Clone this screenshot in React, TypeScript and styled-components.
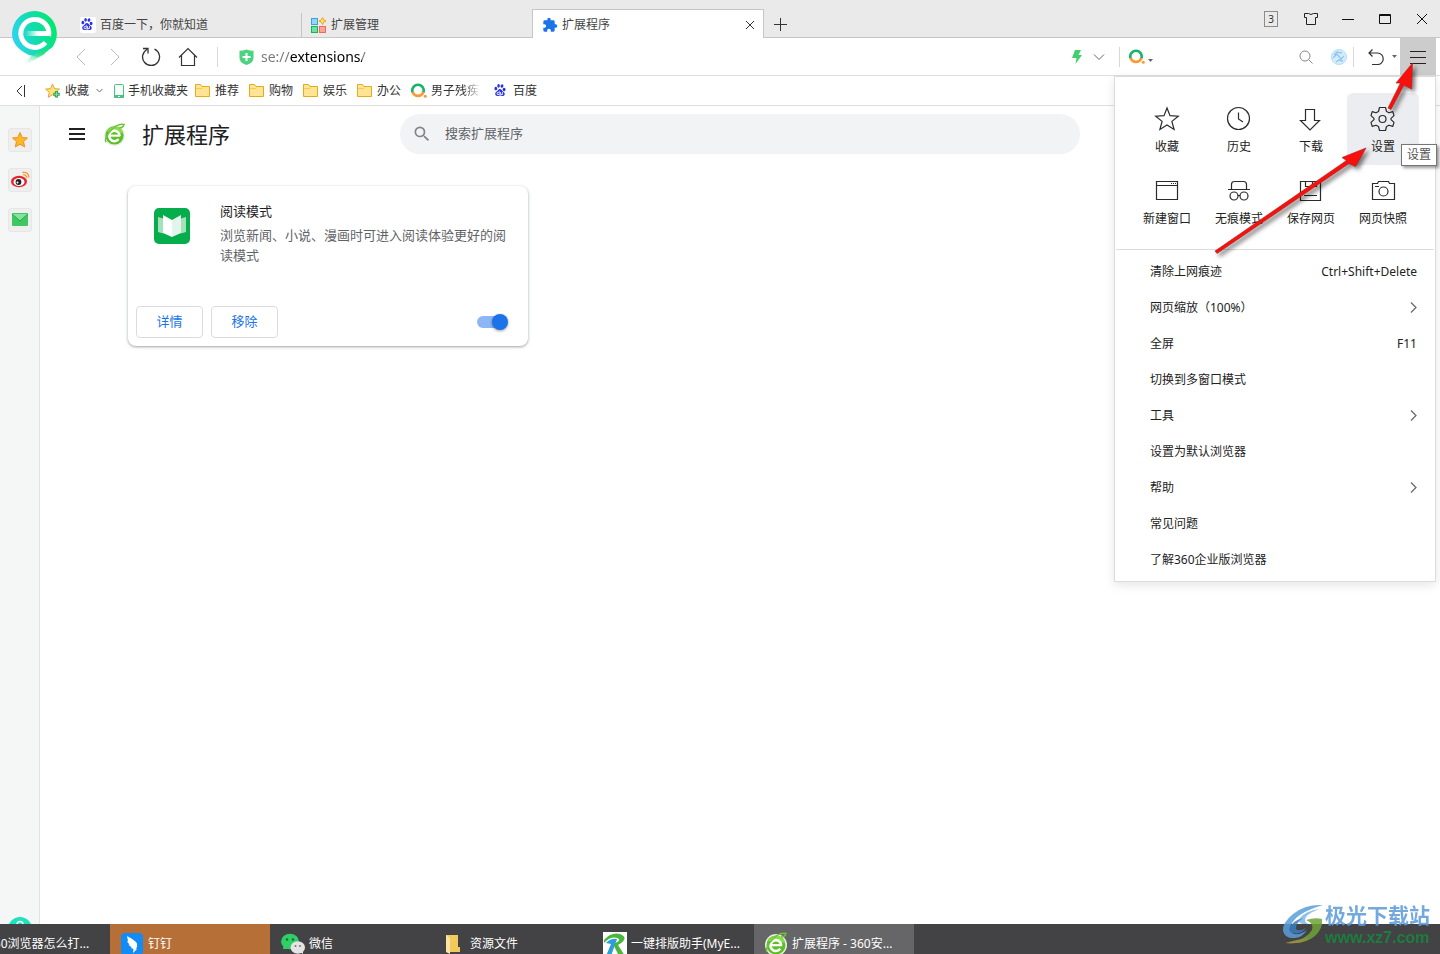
import React from "react";
import styled, { createGlobalStyle, css } from "styled-components";
import { SiBaidu } from "react-icons/si";
import { MdExtension, MdSearch } from "react-icons/md";

const GlobalStyle = createGlobalStyle`
  * { box-sizing: border-box; }
  body {
    margin: 0;
    background: #fff;
    color: #333;
    font-family: "Noto Sans", "Noto Sans CJK SC", sans-serif;
    font-size: 12px;
    line-height: 16px;
  }
  button, input { font: inherit; color: inherit; }
  button { border: 0; padding: 0; background: none; cursor: pointer; }
  a { color: inherit; text-decoration: none; }
  svg { display: block; flex: none; }
`;

/* ---------- Shell ---------- */

const Window = styled.div`
  position: relative;
  display: flex;
  flex-direction: column;
  height: 100vh;
  overflow: hidden;
`;

const BrandMark = styled.div`
  position: absolute;
  left: 11px;
  top: 10px;
  z-index: 2;
`;

const TabStrip = styled.header`
  display: flex;
  align-items: flex-end;
  height: 38px;
  padding-left: 70px;
  background: #eaeaea;
  box-shadow: inset 0 -1px #c6c6c6;
`;

const TabItem = styled.div<{ $active?: boolean; $divided?: boolean }>`
  display: flex;
  align-items: center;
  gap: 4px;
  width: ${(p) => (p.$active ? 232 : 231)}px;
  height: ${(p) => (p.$active ? 29 : 25)}px;
  padding: 0 8px 2px 9px;
  border-left: 1px solid ${(p) => (p.$divided ? "#c6c6c6" : "transparent")};
  ${(p) =>
    p.$active &&
    css`
      padding: 1px 8px 0 9px;
      background: #fff;
      border: 1px solid #c6c6c6;
      border-bottom: 0;
    `}
`;

const TabTitle = styled.button`
  flex: 1;
  height: 20px;
  text-align: left;
  color: #444;
`;

const IconButton = styled.button<{ $width?: number; $active?: boolean }>`
  display: flex;
  align-items: center;
  justify-content: center;
  flex: none;
  width: ${(p) => p.$width ?? 37}px;
  align-self: stretch;
  background: ${(p) => (p.$active ? "#cccccc" : "none")};
`;

const NewTabButton = styled.button`
  display: flex;
  align-items: center;
  justify-content: center;
  width: 32px;
  height: 29px;
`;

const WindowControls = styled.div`
  display: flex;
  align-items: center;
  align-self: stretch;
  margin-left: auto;
`;

const TabCount = styled.button`
  width: 14px;
  height: 16px;
  margin-right: 14px;
  border: 1px solid #8c8c8c;
  font-size: 10px;
  line-height: 14px;
`;

const Toolbar = styled.div`
  display: flex;
  align-items: center;
  height: 38px;
  padding: 0 4px 0 64px;
  border-bottom: 1px solid #dedede;
`;

const Rule = styled.span<{ $before?: number; $after?: number }>`
  flex: none;
  width: 1px;
  height: 20px;
  margin: 0 ${(p) => p.$after ?? 0}px 0 ${(p) => p.$before ?? 0}px;
  background: #d8d8d8;
`;

const AddressField = styled.label`
  display: flex;
  align-items: center;
  gap: 7px;
  flex: 1;
  min-width: 0;
`;

const AddressInput = styled.input`
  flex: 1;
  min-width: 0;
  height: 24px;
  padding: 0;
  border: 0;
  outline: 0;
  font-size: 14px;
  color: transparent;
  caret-color: #333;
  background: linear-gradient(to right, #777 29px, #000 29px, #000 101px, #777 101px);
  -webkit-background-clip: text;
  background-clip: text;
`;

const EngineButton = styled.button`
  display: flex;
  align-items: center;
  gap: 3px;
  flex: none;
  & > :last-child { margin-top: 8px; }
`;

const QuickSearch = styled.input`
  width: 134px;
  height: 24px;
  padding: 0 4px;
  border: 0;
  outline: 0;
  background: none;
`;

const BookmarkBar = styled.nav`
  display: flex;
  align-items: center;
  gap: 7px;
  height: 30px;
  padding-left: 11px;
  border-bottom: 1px solid #dedede;
`;

const FolderGroup = styled.div`
  display: flex;
  gap: 10px;
`;

const Bookmark = styled.a<{ $indent?: number }>`
  display: flex;
  align-items: center;
  gap: 4px;
  padding-left: ${(p) => p.$indent ?? 0}px;
  white-space: nowrap;
`;

const FadedLabel = styled.span`
  width: 52px;
  overflow: hidden;
  mask-image: linear-gradient(to right, #000 32px, transparent 50px);
`;

/* ---------- Page ---------- */

const Body = styled.div`
  display: flex;
  flex: 1;
  min-height: 0;
`;

const SideRail = styled.aside`
  display: flex;
  flex-direction: column;
  align-items: center;
  gap: 16px;
  width: 40px;
  padding-top: 22px;
  overflow: hidden;
  background: #f5f6f6;
  border-right: 1px solid #e2e2e2;
`;

const RailButton = styled.button`
  display: flex;
  align-items: center;
  justify-content: center;
  flex: none;
  width: 24px;
  height: 24px;
  border: 1px solid #e6e6e6;
  border-radius: 3px;
  background: #efefef;
`;

const HelpButton = styled.button`
  flex: none;
  margin: auto 0 -17px;
`;

const Page = styled.main`
  flex: 1;
  min-width: 0;
`;

const PageHeader = styled.div`
  display: grid;
  grid-template-columns: 1fr minmax(0, 680px) 1fr;
  align-items: center;
  height: 56px;
`;

const PageHeading = styled.div`
  display: flex;
  align-items: center;
  padding-left: 29px;
`;

const Heading = styled.h1`
  margin: 0 0 0 16px;
  font-size: 22px;
  line-height: 32px;
  font-weight: 400;
  color: #202124;
  white-space: nowrap;
`;

const BrowserLogo = styled.span`
  margin-left: 18px;
`;

const SearchBox = styled.label`
  display: flex;
  align-items: center;
  gap: 13px;
  height: 40px;
  padding: 0 12px;
  border-radius: 20px;
  background: #f1f3f4;
  color: #80868b;
`;

const SearchInput = styled.input`
  flex: 1;
  min-width: 0;
  padding: 0 0 2px;
  border: 0;
  outline: 0;
  background: none;
  font-size: 13px;
  line-height: 20px;
  color: #202124;
  &::placeholder { color: #5f6368; opacity: 1; }
`;

const CardGrid = styled.div`
  display: grid;
  grid-template-columns: repeat(auto-fill, 400px);
  justify-content: center;
  gap: 12px;
  padding: 24px 0;
`;

const Card = styled.article`
  display: flex;
  flex-direction: column;
  justify-content: space-between;
  min-height: 160px;
  border-radius: 8px;
  background: #fff;
  box-shadow: 0 1px 2px rgba(60, 64, 67, 0.3), 0 1px 3px 1px rgba(60, 64, 67, 0.15);
  font-size: 13px;
  line-height: 20px;
`;

const CardBody = styled.div`
  display: flex;
  gap: 30px;
  padding: 15px 20px 0 26px;
  & > svg { margin-top: 7px; }
`;

const CardTitle = styled.h2`
  margin: 0 0 4px;
  font-size: 13px;
  font-weight: 400;
  color: #202124;
`;

const CardText = styled.p`
  margin: 0;
  color: #5f6368;
`;

const CardActions = styled.div`
  display: flex;
  align-items: center;
  gap: 8px;
  padding: 8px;
`;

const OutlineButton = styled.button`
  width: 67px;
  height: 32px;
  padding-bottom: 2px;
  border: 1px solid #dadce0;
  border-radius: 4px;
  background: #fff;
  color: #1a73e8;
`;

const Toggle = styled.input`
  appearance: none;
  width: 31px;
  height: 12px;
  margin: 0 12px 0 auto;
  border-radius: 8px;
  background: linear-gradient(to right, #8cb6f5 24px, transparent 24px);
  &::before {
    content: "";
    display: block;
    width: 16px;
    height: 16px;
    margin: -2px 0 0 15px;
    border-radius: 50%;
    background: #1a73e8;
    box-shadow: 0 1px 3px rgba(0, 0, 0, 0.4);
  }
`;

/* ---------- Main menu ---------- */

const Menu = styled.div`
  position: absolute;
  z-index: 3;
  top: 76px;
  right: 4px;
  width: 322px;
  padding: 16px 1px 3px;
  border: 1px solid #dcdcdc;
  background: #fff;
  box-shadow: 0 3px 10px rgba(0, 0, 0, 0.1);
  color: #222;
`;

const TileGrid = styled.div`
  display: grid;
  grid-template-columns: repeat(4, 72px);
  padding: 0 15px 12px;
`;

const Tile = styled.button<{ $active?: boolean }>`
  display: flex;
  flex-direction: column;
  align-items: center;
  gap: 4px;
  height: 72px;
  padding-top: 10px;
  border-radius: 6px;
  background: ${(p) => (p.$active ? "#ecedf1" : "none")};
`;

const MenuRows = styled.div`
  padding-top: 4px;
  border-top: 1px solid #dcdcdc;
`;

const MenuRow = styled.button`
  display: flex;
  align-items: center;
  justify-content: space-between;
  width: 100%;
  height: 36px;
  padding: 0 17px 0 34px;
`;

const Tooltip = styled.div`
  position: absolute;
  z-index: 4;
  top: 144px;
  right: 3px;
  padding: 2px 5px;
  border: 1px solid #767676;
  background: #fff;
  box-shadow: 2px 2px 3px rgba(0, 0, 0, 0.4);
  color: #555;
`;

const Pointers = styled.svg`
  position: absolute;
  z-index: 5;
  top: 50px;
  right: 0;
  pointer-events: none;
  filter: drop-shadow(3px 3px 2px rgba(0, 0, 0, 0.5));
`;

/* ---------- Taskbar ---------- */

const Taskbar = styled.footer`
  display: flex;
  gap: 1px;
  height: 30px;
  overflow: hidden;
  background: #434244;
  color: #fff;
`;

const TaskButton = styled.button<{ $tone?: string; $clipped?: boolean }>`
  display: flex;
  align-items: center;
  gap: 4px;
  flex: none;
  width: 160px;
  height: 40px;
  margin-left: ${(p) => (p.$clipped ? -51 : 0)}px;
  padding-left: 10px;
  background: ${(p) => p.$tone ?? "none"};
  white-space: nowrap;
`;

const TaskIcon = styled.span`
  display: flex;
  justify-content: center;
  width: 24px;
`;

const Watermark = styled.div`
  position: absolute;
  z-index: 2;
  right: 10px;
  bottom: 5px;
  display: flex;
  opacity: 0.85;
`;

const WatermarkName = styled.div`
  font-size: 21px;
  line-height: 24px;
  font-weight: 700;
  color: #5b9bd8;
`;

const WatermarkSite = styled.div`
  font-family: "Liberation Sans", sans-serif;
  font-size: 16px;
  line-height: 22px;
  font-weight: 700;
  color: #17883f;
`;

/* ---------- Drawings ---------- */

const line = { fill: "none", stroke: "currentColor" } as const;

const PinLogo = () => (
  <svg width="47" height="58" viewBox="0 0 47 58" aria-hidden>
    <defs>
      <linearGradient id="pin" x1="0" y1="0.7" x2="1" y2="0.4">
        <stop offset="0" stopColor="#2fd3f5" />
        <stop offset="0.5" stopColor="#12dcb0" />
        <stop offset="1" stopColor="#04e86c" />
      </linearGradient>
      <linearGradient id="tail" x1="0.8" y1="0" x2="0.3" y2="1">
        <stop offset="0" stopColor="#04e570" />
        <stop offset="0.4" stopColor="#2be28a" />
        <stop offset="1" stopColor="#aef5d4" stopOpacity="0" />
      </linearGradient>
      <linearGradient id="bar" x1="0" x2="1">
        <stop offset="0" stopColor="#fff" stopOpacity="0" />
        <stop offset="0.5" stopColor="#fff" />
      </linearGradient>
    </defs>
    <path d="M23.500 1A22.500 22.500 0 0 1 41 37.500L27 47 18 45Q1 37 1 23.500A22.500 22.500 0 0 1 23.500 1Z" fill="url(#pin)" />
    <path d="M43 35 L32 45 L11 57 Q16 51 20 46 Q30 42 43 35Z" fill="url(#tail)" />
    <path d="M37.600 26 A14 14 0 1 0 34.500 32.500" fill="none" stroke="#fff" strokeWidth="5" />
    <rect x="14" y="21" width="26" height="5" fill="url(#bar)" />
  </svg>
);

const BaiduIcon = () => (
  <svg width="16" height="16" viewBox="0 0 16 16" aria-hidden>
    <rect width="16" height="16" rx="2" fill="#fff" />
    <SiBaidu x="1" y="1" width="14" height="14" color="#2932e1" />
  </svg>
);

const AppsIcon = () => (
  <svg width="16" height="16" viewBox="0 0 16 16" aria-hidden>
    <rect x="0.500" y="1.500" width="6" height="6" fill="#8fd6f7" stroke="#3ba3dc" />
    <rect x="0.500" y="9.500" width="6" height="6" fill="#6ee0a0" stroke="#1fae5c" />
    <rect x="8.500" y="9.500" width="6" height="6" fill="#fba59a" stroke="#f06a5c" />
    <path d="M11.500 0.500l1.200 2.300 2.300 1.200-2.300 1.200-1.200 2.300-1.200-2.300L8 4l2.300-1.200z" fill="#ffe066" stroke="#eba61c" />
  </svg>
);

const RingIcon = () => (
  <svg width="16" height="16" viewBox="0 0 16 16" aria-hidden>
    <path d="M1.700 9.500A5.700 5.700 0 1 1 12.300 9.500" fill="none" stroke="#18b46c" strokeWidth="2.600" />
    <path d="M1.700 9.300A5.700 5.700 0 0 0 12.300 9.300" fill="none" stroke="#fb9a35" strokeWidth="2.600" />
    <circle cx="14.300" cy="13.300" r="1.500" fill="#fb9a35" />
  </svg>
);

const FolderIcon = () => (
  <svg width="16" height="16" viewBox="0 0 16 16" aria-hidden>
    <path d="M0.500 1.500h5l1.500 2h7.500v10h-14z" fill="#ffe493" stroke="#e5ab1c" />
    <path d="M1 5.500h6l1-1" fill="none" stroke="#f3cb5c" />
  </svg>
);

const FavouriteIcon = () => (
  <svg width="16" height="16" viewBox="0 0 16 16" aria-hidden>
    <path d="M7.500 1l2 4.600 5 .5-3.800 3.300 1.100 4.900-4.300-2.600-4.300 2.600 1.100-4.900L.6 6.100l4.900-.5z" fill="#ffe27a" stroke="#e9a43a" strokeLinejoin="round" />
    <path d="M11.500 8v6.500M8.300 11.300h6.500" stroke="#2fa565" strokeWidth="3" />
    <path d="M11.500 9v4.500M9.300 11.300h4.500" stroke="#7fe0a6" strokeWidth="1" />
  </svg>
);

const PhoneIcon = () => (
  <svg width="14" height="16" viewBox="2 0 14 16" aria-hidden>
    <rect x="6.500" y="1.500" width="9" height="13" rx="1" fill="#f3fff8" stroke="#4bc27f" />
    <path d="M6 12h10v3h-10z" fill="#4bc27f" />
    <path d="M10 13.500h2" stroke="#fff" />
  </svg>
);

const GreenE = ({ size = 24 }: { size?: number }) => (
  <svg width={size} height={size} viewBox="0 0 24 24" aria-hidden>
    <circle cx="12" cy="13" r="11" fill="#e9eee7" />
    <circle cx="12" cy="13" r="9.500" fill="#5bbf26" />
    <path d="M4 9Q8 3 15 4Q20 6 21 11L12 9Z" fill="#8bdc4c" />
    <path d="M17.300 13.500A5.400 5.400 0 1 0 16.200 16.800" fill="none" stroke="#fff" strokeWidth="2.600" />
    <path d="M7 13.200h11" stroke="#fff" strokeWidth="2.200" />
    <path d="M3 20Q1 16 8 8T22 1.500Q21 5 17 5" fill="none" stroke="#6cc637" strokeWidth="1.500" />
  </svg>
);

const ReaderIcon = () => (
  <svg width="36" height="36" viewBox="0 0 36 36" aria-hidden>
    <rect width="36" height="36" rx="5" fill="#06ad4b" />
    <path d="M4 9l5 1.500v15L4 24zM32 9l-5 1.500v15l5-1.500z" fill="#a6dfbc" />
    <path d="M9 7l9 5v17l-9-4z" fill="#fff" />
    <path d="M27 7l-9 5v17l9-4z" fill="#e3f4ea" />
  </svg>
);

const Caret = () => (
  <svg width="5" height="3" viewBox="0 0 5 3" aria-hidden>
    <path d="M0 0h5L2.500 3z" fill="#666" />
  </svg>
);

const Chevron = ({ size = 12 }: { size?: number }) => (
  <svg width={size} height={size} viewBox="0 0 12 12" aria-hidden fill="none" stroke="#666" strokeWidth={12 / size}>
    <path d="M1 3.500l5 5 5-5" />
  </svg>
);

const RowArrow = () => (
  <svg width="7" height="12" viewBox="0 0 7 12" aria-hidden fill="none" stroke="#666" strokeWidth="1.200">
    <path d="M1 .5l5 5-5 5" />
  </svg>
);

const tileDrawings: Record<string, React.ReactNode> = {
  收藏: <path d="M16 5l3 7.700 8.300.5-6.400 5.200 2.200 8.100L16 22l-7.100 4.500 2.200-8.100-6.400-5.200 8.300-.5z" />,
  历史: (
    <>
      <circle cx="15.500" cy="15.500" r="11" />
      <path d="M15.500 9.500v6.500l4.500 3" />
    </>
  ),
  下载: <path d="M10.500 6.500h9v11h5L15 27 5.500 17.500h5z" />,
  设置: (
    <>
      <path d="M12.500 4.500h6l1 4L22 9.800l3.800-1.200 1.200 4-3 2.800v1.200l3 2.800-1.200 4L22 22.200l-2.500 1.300-1 4h-6l-1-4L9 22.200l-3.800 1.200-1.200-4 3-2.800v-1.200l-3-2.800 1.200-4L9 9.800l2.500-1.300z" strokeLinejoin="round" />
      <circle cx="15.500" cy="16" r="3.500" />
    </>
  ),
  新建窗口: (
    <>
      <path d="M5.500 6.500h21v18h-21zM5.500 10.500h21" />
      <path d="M20 8.500h1M22 8.500h1M24 8.500h1" />
    </>
  ),
  无痕模式: (
    <>
      <path d="M8.500 14.500v-5q0-3 3-3h9q3 0 3 3v5M5 14.500h22" />
      <circle cx="11" cy="21" r="4" />
      <circle cx="21" cy="21" r="4" />
      <path d="M15 20.500h2" />
    </>
  ),
  保存网页: <path d="M5.500 6.500h20v19h-20zM10.500 6.500v5h11v-5M17.500 6.500v5M9 20.500h13" />,
  网页快照: (
    <>
      <path d="M5.500 8.500h5l1-2h10l1 2h5v16h-22zM8 11.500h4" />
      <circle cx="16.500" cy="16.500" r="4.500" />
    </>
  ),
};

const TileIcon = ({ name }: { name: string }) => (
  <svg width="32" height="32" viewBox="0 0 32 32" aria-hidden fill="none" stroke="#2b2b2b" strokeWidth="1.200">
    {tileDrawings[name]}
  </svg>
);

const DingIcon = () => (
  <svg width="22" height="22" viewBox="0 0 22 22" aria-hidden>
    <rect width="22" height="22" rx="4" fill="#118cf6" />
    <path d="M6 3q6 3 9 6 2 2 1 5l-1 2h1l-4 4 .5-4-2.500-1 .5-1-3-2 1-.5L6 8.500l1-.5z" fill="#fff" />
  </svg>
);

const WeChatIcon = () => (
  <svg width="24" height="24" viewBox="0 0 24 24" aria-hidden>
    <path d="M2 17l1-5h7v4l-5 1z" fill="#2fce66" />
    <ellipse cx="9" cy="9.500" rx="9" ry="7.700" fill="#2fce66" />
    <ellipse cx="16.800" cy="15.500" rx="7.200" ry="6.200" fill="#e4e4e4" />
    <path d="M19 20l3 2v-4z" fill="#e4e4e4" />
    <circle cx="6" cy="7.500" r="1.200" fill="#176c36" />
    <circle cx="12" cy="7.500" r="1.200" fill="#176c36" />
    <circle cx="14.500" cy="14" r="1" fill="#777" />
    <circle cx="19" cy="14" r="1" fill="#777" />
  </svg>
);

const ExplorerIcon = () => (
  <svg width="18" height="20" viewBox="0 0 18 20" aria-hidden>
    <path d="M1 1h12v12h2v5H1z" fill="#f2c95c" />
    <path d="M1 1l4 3v16l-4-2z" fill="#fbe3a0" />
  </svg>
);

const TypesetIcon = () => (
  <svg width="24" height="24" viewBox="0 0 24 24" aria-hidden>
    <rect width="24" height="24" fill="#fff" />
    <path d="M1 8Q8 0 17 2Q27 6 15 13L22 24H16L10 12Q20 8 14 6Q8 4 1 11Z" fill="#4cb63b" />
    <path d="M3 11Q8 6 14 7L8 24H3L8 12Z" fill="#2d9fd8" />
  </svg>
);

const WatermarkLogo = () => (
  <svg width="44" height="44" viewBox="0 0 44 44" aria-hidden>
    <path d="M42 2Q24 1 12 11Q1 20 2 28Q4 36 14 35Q22 34 26 27Q20 32 13 31Q7 29 10 22Q15 10 42 2Z" fill="#5a9fda" />
    <path d="M39 6Q24 8 19 15Q16 20 22 21L27 21Q22 18 25 14Q29 9 39 6Z" fill="#7db9e8" />
    <path d="M8 26Q12 17 22 15Q14 21 15 26Q18 29 25 25Q20 32 12 30Q8 29 8 26Z" fill="#3a7fc0" />
    <path d="M25 17Q34 14 41 16Q42 26 34 33Q24 41 11 40Q26 35 31 27Q33 20 25 17Z" fill="#6ea336" />
    <path d="M4 40Q18 36 29 35Q18 42 4 40Z" fill="#a99a44" />
  </svg>
);

/* ---------- Content ---------- */

const tiles = ["收藏", "历史", "下载", "设置", "新建窗口", "无痕模式", "保存网页", "网页快照"];

const rows: { label: string; hint?: string; more?: boolean }[] = [
  { label: "清除上网痕迹", hint: "Ctrl+Shift+Delete" },
  { label: "网页缩放（100%）", more: true },
  { label: "全屏", hint: "F11" },
  { label: "切换到多窗口模式" },
  { label: "工具", more: true },
  { label: "设置为默认浏览器" },
  { label: "帮助", more: true },
  { label: "常见问题" },
  { label: "了解360企业版浏览器" },
];

const tasks: { label: string; icon?: React.ReactNode; tone?: string; clipped?: boolean }[] = [
  { label: "360浏览器怎么打...", clipped: true },
  { label: "钉钉", icon: <DingIcon />, tone: "#b56f37" },
  { label: "微信", icon: <WeChatIcon /> },
  { label: "资源文件", icon: <ExplorerIcon /> },
  { label: "一键排版助手(MyE...", icon: <TypesetIcon /> },
  { label: "扩展程序 - 360安...", icon: <GreenE />, tone: "#666668" },
];

export default function App() {
  return (
    <Window>
      <GlobalStyle />
      <BrandMark><PinLogo /></BrandMark>

      <TabStrip>
        <TabItem><BaiduIcon /><TabTitle>百度一下，你就知道</TabTitle></TabItem>
        <TabItem $divided><AppsIcon /><TabTitle>扩展管理</TabTitle></TabItem>
        <TabItem $active>
          <MdExtension size={16} color="#1a73e8" />
          <TabTitle>扩展程序</TabTitle>
          <IconButton $width={10} aria-label="关闭标签页">
            <svg width="10" height="10" viewBox="0 0 10 10" {...line}><path d="M1 1l8 8M9 1l-8 8" /></svg>
          </IconButton>
        </TabItem>
        <NewTabButton aria-label="新建标签页">
          <svg width="14" height="14" viewBox="0 0 14 14" {...line}><path d="M7.500 1v13M1 7.500h13" /></svg>
        </NewTabButton>
        <WindowControls>
          <TabCount>3</TabCount>
          <IconButton aria-label="皮肤">
            <svg width="16" height="14" viewBox="0 0 16 14" {...line} stroke="#222"><path d="M1.500 1.500h4q2.500 2 5 0h4v4h-2v7h-9v-7h-2z" /></svg>
          </IconButton>
          <IconButton aria-label="最小化">
            <svg width="12" height="12" viewBox="0 0 12 12" stroke="#111"><path d="M0 6.500h12" /></svg>
          </IconButton>
          <IconButton aria-label="最大化">
            <svg width="12" height="10" viewBox="0 0 12 10" {...line} stroke="#111"><path d="M.5.5h11v9H.500zM0 1.500h12" /></svg>
          </IconButton>
          <IconButton aria-label="关闭">
            <svg width="12" height="12" viewBox="0 0 12 12" {...line} stroke="#111"><path d="M1 1l10 10M11 1L1 11" /></svg>
          </IconButton>
        </WindowControls>
      </TabStrip>

      <Toolbar>
        <IconButton $width={34} aria-label="后退">
          <svg width="10" height="18" viewBox="0 0 10 18" fill="none" stroke="#bbb"><path d="M9 1L1 9l8 8" /></svg>
        </IconButton>
        <IconButton $width={34} aria-label="前进">
          <svg width="10" height="18" viewBox="0 0 10 18" fill="none" stroke="#bbb"><path d="M1 1l8 8-8 8" /></svg>
        </IconButton>
        <IconButton $width={38} aria-label="刷新">
          <svg width="20" height="20" viewBox="0 0 20 20" fill="none" stroke="#333" strokeWidth="1.300">
            <path d="M13.500 2.200A8.500 8.500 0 1 1 6 2.500M2 1.500h5v5" />
          </svg>
        </IconButton>
        <IconButton $width={36} aria-label="主页">
          <svg width="20" height="20" viewBox="0 0 20 20" fill="none" stroke="#333" strokeWidth="1.200">
            <path d="M1 10.500L10 1.500l9 9M3.500 8.500v10h13v-10" />
          </svg>
        </IconButton>
        <Rule $before={11} $after={21} />
        <AddressField>
          <svg width="15" height="16" viewBox="0 0 15 16" aria-hidden>
            <path d="M.5 1.500Q4 2 7.500.5 11 2 14.500 1.500V9q0 5-7 7-7-2-7-7z" fill="#4bd37f" />
            <path d="M7.500 4v8M3.500 8h8" stroke="#fff" strokeWidth="2" />
          </svg>
          <AddressInput aria-label="地址" defaultValue="se://extensions/" />
        </AddressField>
        <IconButton $width={20} aria-label="极速模式">
          <svg width="10" height="14" viewBox="0 0 10 14"><path d="M3 0h6L6.500 5H10L3.500 14 4.500 8H0z" fill="#42d06e" /></svg>
        </IconButton>
        <IconButton $width={24} aria-label="切换内核"><Chevron /></IconButton>
        <Rule $before={8} $after={9} />
        <EngineButton aria-label="搜索引擎"><RingIcon /><Caret /></EngineButton>
        <QuickSearch aria-label="快速搜索" />
        <IconButton $width={38} aria-label="搜索">
          <svg width="14" height="14" viewBox="0 0 14 14" fill="none" stroke="#888"><circle cx="6" cy="6" r="5" /><path d="M9.500 9.500l4 4" /></svg>
        </IconButton>
        <IconButton $width={28} aria-label="助手">
          <svg width="16" height="16" viewBox="0 0 16 16">
            <circle cx="8" cy="8" r="7.500" fill="#d6ecfc" stroke="#b3ddfa" />
            <path d="M2 9l4-4 4 5 3-3M3 6l3-3 5 1M5 13l3-2 4 1" fill="none" stroke="#8cc8f5" strokeWidth="1.300" />
          </svg>
        </IconButton>
        <Rule $after={10} />
        <IconButton $width={24} aria-label="撤销关闭">
          <svg width="16" height="16" viewBox="0 0 16 16" fill="none" stroke="#333" strokeWidth="1.200">
            <path d="M4 15.500h5.500a5.500 5.500 0 0 0 0-11.500H1M4.500.5L1 4l3.500 3.500" />
          </svg>
        </IconButton>
        <IconButton $width={12} aria-label="更多已关闭页面"><Caret /></IconButton>
        <IconButton $width={36} $active aria-label="菜单">
          <svg width="16" height="14" viewBox="0 0 16 14" stroke="#222"><path d="M0 1.500h16M0 7.500h16M0 13.500h16" /></svg>
        </IconButton>
      </Toolbar>

      <BookmarkBar aria-label="收藏栏">
        <IconButton $width={20} aria-label="收起">
          <svg width="10" height="12" viewBox="0 0 10 12" {...line}><path d="M6 1L1 6l5 5M8.500 0v12" /></svg>
        </IconButton>
        <Bookmark href="#favourites" $indent={7}><FavouriteIcon />收藏</Bookmark>
        <Chevron size={7} />
        <Bookmark href="#phone"><PhoneIcon />手机收藏夹</Bookmark>
        <FolderGroup>
          {["推荐", "购物", "娱乐", "办公"].map((name) => (
            <Bookmark href="#folder" key={name}><FolderIcon />{name}</Bookmark>
          ))}
          <Bookmark href="#news"><RingIcon /><FadedLabel>男子残疾保</FadedLabel></Bookmark>
          <Bookmark href="#baidu"><BaiduIcon />百度</Bookmark>
        </FolderGroup>
      </BookmarkBar>

      <Body>
        <SideRail>
          <RailButton aria-label="收藏">
            <svg width="16" height="16" viewBox="0 0 16 16"><path d="M8 .5l2.200 5 5.300.5-4 3.600 1.200 5.300L8 12.200l-4.700 2.700 1.200-5.300L.5 6l5.300-.5z" fill="#fdb827" stroke="#ee8f1e" /></svg>
          </RailButton>
          <RailButton aria-label="微博">
            <svg width="20" height="20" viewBox="0 0 20 20">
              <ellipse cx="9" cy="11.500" rx="8" ry="5.700" fill="#e3242b" />
              <ellipse cx="9" cy="12" rx="5.500" ry="4" fill="#fff" />
              <circle cx="8.500" cy="12" r="2.900" fill="#222" />
              <circle cx="7.500" cy="12.500" r="1" fill="#fff" />
              <path d="M13 5q3-1 4 3M12.500 2.500q6-1 6.500 5" fill="none" stroke="#f2982c" strokeWidth="1.300" />
            </svg>
          </RailButton>
          <RailButton aria-label="邮件">
            <svg width="16" height="14" viewBox="0 0 16 14"><rect width="16" height="13" rx="1" fill="#3fc862" /><path d="M0 1l8 7 8-7" fill="#83e29b" stroke="#23a548" /></svg>
          </RailButton>
          <HelpButton aria-label="帮助">
            <svg width="24" height="24" viewBox="0 0 24 24">
              <circle cx="12" cy="12" r="12" fill="#1be3bd" />
              <circle cx="12" cy="7.500" r="3" fill="none" stroke="#fff" strokeWidth="1.500" />
            </svg>
          </HelpButton>
        </SideRail>

        <Page>
          <PageHeader>
            <PageHeading>
              <IconButton $width={16} aria-label="主菜单">
                <svg width="16" height="12" viewBox="0 0 16 12" stroke="#202124" strokeWidth="2"><path d="M0 1h16M0 6h16M0 11h16" /></svg>
              </IconButton>
              <BrowserLogo><GreenE size={23} /></BrowserLogo>
              <Heading>扩展程序</Heading>
            </PageHeading>
            <SearchBox>
              <MdSearch size={20} />
              <SearchInput type="search" placeholder="搜索扩展程序" aria-label="搜索扩展程序" />
            </SearchBox>
          </PageHeader>
          <CardGrid>
            <Card>
              <CardBody>
                <ReaderIcon />
                <div>
                  <CardTitle>阅读模式</CardTitle>
                  <CardText>浏览新闻、小说、漫画时可进入阅读体验更好的阅读模式</CardText>
                </div>
              </CardBody>
              <CardActions>
                <OutlineButton>详情</OutlineButton>
                <OutlineButton>移除</OutlineButton>
                <Toggle type="checkbox" defaultChecked aria-label="启用阅读模式" />
              </CardActions>
            </Card>
          </CardGrid>
        </Page>
      </Body>

      <Taskbar>
        {tasks.map((task) => (
          <TaskButton key={task.label} $tone={task.tone} $clipped={task.clipped}>
            <TaskIcon>{task.icon}</TaskIcon>
            {task.label}
          </TaskButton>
        ))}
      </Taskbar>

      <Menu>
        <TileGrid>
          {tiles.map((name) => (
            <Tile key={name} $active={name === "设置"}><TileIcon name={name} />{name}</Tile>
          ))}
        </TileGrid>
        <MenuRows>
          {rows.map((row) => (
            <MenuRow key={row.label}>
              <span>{row.label}</span>
              {row.hint && <span>{row.hint}</span>}
              {row.more && <RowArrow />}
            </MenuRow>
          ))}
        </MenuRows>
      </Menu>
      <Tooltip role="tooltip">设置</Tooltip>
      <Pointers width="240" height="220" viewBox="1200 50 240 220" aria-hidden>
        <g fill="#f8100c" stroke="#a3201c" strokeWidth="0.600">
          <path d="M1215 251L1346.500 160.500 1342 157.500 1366 148 1355.500 166.500 1349 163.500 1217 253.500Z" />
          <path d="M1388 108L1400.500 83 1396 83 1412.500 63 1411.500 89 1404 85 1391 109.500Z" />
        </g>
      </Pointers>
      <Watermark>
        <WatermarkLogo />
        <div>
          <WatermarkName>极光下载站</WatermarkName>
          <WatermarkSite>www.xz7.com</WatermarkSite>
        </div>
      </Watermark>
    </Window>
  );
}
